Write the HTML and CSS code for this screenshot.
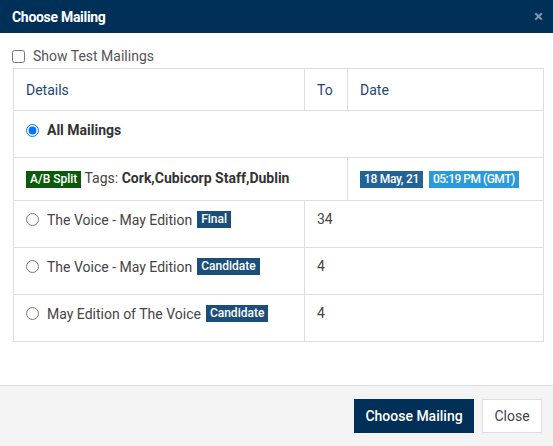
FILE: index.html
```html
<!DOCTYPE html>
<html>
<head>
<meta charset="utf-8">
<link rel="stylesheet" href="styles.css">
</head>
<body>
<div class="modal">
  <div class="modal-header">
    <span class="modal-title">Choose Mailing</span>
    <span class="modal-close">&times;</span>
  </div>
  <div class="modal-body">
    <label class="check-row"><input type="checkbox" class="check"> <span>Show Test Mailings</span></label>
    <table class="grid">
      <colgroup><col class="c-details"><col class="c-to"><col class="c-date"></colgroup>
      <thead>
        <tr class="head-row"><th>Details</th><th>To</th><th>Date</th></tr>
      </thead>
      <tbody>
        <tr class="all-row">
          <td colspan="3"><label class="opt"><input type="radio" name="m" checked class="radio"><b>All Mailings</b></label></td>
        </tr>
        <tr class="split-row">
          <td colspan="2"><span class="badge green">A/B Split</span> Tags: <b>Cork,Cubicorp Staff,Dublin</b></td>
          <td><span class="badge date">18 May, 21</span><span class="badge time">05:19 PM (GMT)</span></td>
        </tr>
        <tr class="mail-row">
          <td><label class="opt"><input type="radio" name="m" class="radio">The Voice - May Edition <span class="badge navy">Final</span></label></td>
          <td colspan="2">34</td>
        </tr>
        <tr class="mail-row">
          <td><label class="opt"><input type="radio" name="m" class="radio">The Voice - May Edition <span class="badge navy">Candidate</span></label></td>
          <td colspan="2">4</td>
        </tr>
        <tr class="mail-row">
          <td><label class="opt"><input type="radio" name="m" class="radio">May Edition of The Voice <span class="badge navy">Candidate</span></label></td>
          <td colspan="2">4</td>
        </tr>
      </tbody>
    </table>
  </div>
  <div class="modal-footer">
    <button class="btn btn-primary">Choose Mailing</button>
    <button class="btn btn-default">Close</button>
  </div>
</div>
</body>
</html>
```
FILE: styles.css
```css
html, body {
  margin: 0;
  padding: 0;
  background: #fff;
}
body {
  font-family: Roboto, "Noto Sans", sans-serif;
  font-size: 14px;
  color: #444;
  width: 553px;
  height: 446px;
  overflow: hidden;
}
.modal {
  display: flex;
  flex-direction: column;
  height: 446px;
}
.modal-header {
  height: 33px;
  background: #003057;
  display: flex;
  align-items: center;
  justify-content: space-between;
  padding: 0 10px 0 12px;
  box-sizing: border-box;
}
.modal-title {
  color: #fff;
  font-weight: 700;
  font-size: 14px;
  letter-spacing: -0.3px;
}
.modal-close {
  color: #7f95ab;
  font-weight: 700;
  font-size: 17px;
  line-height: 1;
}
.modal-body {
  flex: 1;
  padding: 15px 10px 0 13px;
  border-bottom: 1px solid #dcdcdc;
}
.check-row {
  display: flex;
  align-items: center;
  gap: 8px;
  height: 16px;
  margin-left: -1px;
  color: #555;
}
.check {
  margin: 0;
  width: 13px;
  height: 13px;
}
.grid {
  margin-top: 4px;
  width: 530px;
  border-collapse: collapse;
  table-layout: fixed;
}
.c-details { width: 291px; }
.c-to { width: 43px; }
.c-date { width: 196px; }
.grid th, .grid td {
  border: 1px solid #dedede;
  padding: 0 12px;
  text-align: left;
  vertical-align: top;
}
.grid th {
  height: 41px;
  vertical-align: middle;
  font-weight: 400;
  color: #1d4670;
}
.all-row td {
  height: 47px;
  padding-top: 11px;
  box-sizing: border-box;
}
.all-row b {
  color: #333;
}
.split-row td {
  height: 42px;
  vertical-align: middle;
  color: #444;
}
.split-row b { color: #333; }
.mail-row td {
  height: 47px;
  padding-top: 10px;
  box-sizing: border-box;
}
.opt {
  display: flex;
  align-items: center;
  white-space: nowrap;
}
.radio {
  margin: 0 8px 0 0;
  width: 13px;
  height: 13px;
}
.opt .badge { margin-left: 5px; }
.badge {
  display: inline-block;
  color: #fff;
  font-size: 12px;
  font-weight: 500;
  line-height: 17px;
  padding: 0 4px;
}
.green { background: #0b5a0b; }
.date { background: #236395; letter-spacing: -0.3px; }
.time { background: #2b9ad8; letter-spacing: -0.5px; margin-left: 6px; }
.navy { background: #1b4f7a; }
.modal-footer {
  height: 60px;
  background: #f4f4f4;
  display: flex;
  align-items: center;
  justify-content: flex-end;
  gap: 8px;
  padding: 0 11px 0 0;
  box-sizing: border-box;
}
.btn {
  font-family: Roboto, "Noto Sans", sans-serif;
  font-size: 14px;
  height: 34px;
  padding: 0;
  border: 1px solid transparent;
  white-space: nowrap;
  cursor: pointer;
}
.btn-primary {
  background: #003057;
  color: #fff;
  font-weight: 500;
  width: 120px;
}
.btn-default {
  background: #fff;
  color: #444;
  border-color: #dcdcdc;
  width: 60px;
}
```
